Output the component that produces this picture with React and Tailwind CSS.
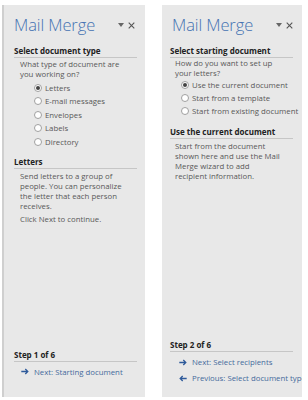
import React from "react";

const font = { fontFamily: '"Open Sans", "Noto Sans", sans-serif' };

function Radio({ checked, label, h }) {
  return (
    <div className={`flex items-center ${h}`}>
      <span className="w-[8px] h-[8px] rounded-full border border-[#a0a0a0] bg-white flex items-center justify-center mr-[3px] shrink-0">
        {checked && <span className="w-[4px] h-[4px] rounded-full bg-[#444]" />}
      </span>
      <span className="whitespace-nowrap">{label}</span>
    </div>
  );
}

function Header({ pr }) {
  return (
    <div className={`flex items-center justify-between pl-[10px] ${pr} pt-[10px] h-[30px]`}>
      <div className="text-[16.5px] font-light text-[#4472b2] leading-[20px] tracking-[-0.1px]">Mail Merge</div>
      <div className="flex items-center gap-[4px] text-[#555]">
        <svg width="6" height="4" viewBox="0 0 6 4"><path d="M0 0h6L3 4z" fill="#666" /></svg>
        <svg width="7" height="7" viewBox="0 0 7 7"><path d="M0.7 0.7l5.6 5.6M6.3 0.7L0.7 6.3" stroke="#555" strokeWidth="1.1" /></svg>
      </div>
    </div>
  );
}

function SectionTitle({ children, mx }) {
  return (
    <div className={`${mx} font-bold text-[8px] text-[#222] leading-[11px] pb-[1px] border-b border-[#c6c6c6] whitespace-nowrap`}>
      {children}
    </div>
  );
}

function Arrow({ dir }) {
  return (
    <svg width="8" height="7" viewBox="0 0 8 7" className="mr-[5px] shrink-0">
      {dir === "right" ? (
        <path d="M0.3 3.5h6.5M4.3 1l2.5 2.5L4.3 6" stroke="#2e5a9a" strokeWidth="1.3" fill="none" />
      ) : (
        <path d="M7.7 3.5H1.2M3.7 1L1.2 3.5 3.7 6" stroke="#2e5a9a" strokeWidth="1.3" fill="none" />
      )}
    </svg>
  );
}

function Link({ dir, children, pl, h }) {
  return (
    <div className={`flex items-center ${pl} ${h} text-[#456a9c] whitespace-nowrap overflow-hidden`}>
      <Arrow dir={dir} />
      <span>{children}</span>
    </div>
  );
}

export default function App() {
  return (
    <div className="w-[308px] h-[400px] bg-white flex items-start text-[7.8px] text-[#585858] leading-[10px]" style={font}>
      <div className="ml-[2px] mt-[5px] w-[143px] h-[392px] bg-[#e8e8e8] border-l-2 border-[#cfcfcf] flex flex-col">
        <Header pr="pr-[10px]" />
        <div className="mt-[10px]"><SectionTitle mx="ml-[10px] mr-[8px]">Select document type</SectionTitle></div>
        <div className="pl-[16px] mt-[1px]">
          <div>What type of document are</div>
          <div>you working on?</div>
        </div>
        <div className="pl-[30px] mt-[2px]">
          <Radio h="h-[13.5px]" checked label="Letters" />
          <Radio h="h-[13.5px]" label="E-mail messages" />
          <Radio h="h-[13.5px]" label="Envelopes" />
          <Radio h="h-[13.5px]" label="Labels" />
          <Radio h="h-[13.5px]" label="Directory" />
        </div>
        <div className="mt-[7px]"><SectionTitle mx="ml-[10px] mr-[8px]">Letters</SectionTitle></div>
        <div className="pl-[16px] mt-[2px]">
          <div>Send letters to a group of</div>
          <div>people. You can personalize</div>
          <div>the letter that each person</div>
          <div>receives.</div>
          <div className="mt-[3px]">Click Next to continue.</div>
        </div>
        <div className="mt-auto mb-[18px]">
          <SectionTitle mx="ml-[10px] mr-[8px]">Step 1 of 6</SectionTitle>
          <div className="pt-[2px]">
            <Link dir="right" pl="pl-[17px]" h="h-[15px]">Next: Starting document</Link>
          </div>
        </div>
      </div>
      <div className="ml-[17px] mt-[5px] w-[140px] h-[392px] bg-[#e8e8e8] flex flex-col">
        <Header pr="pr-[9px]" />
        <div className="mt-[10px]"><SectionTitle mx="ml-[8px] mr-[9px]">Select starting document</SectionTitle></div>
        <div className="pl-[13px]">
          <div>How do you want to set up</div>
          <div>your letters?</div>
        </div>
        <div className="pl-[19px] mt-[0.5px]">
          <Radio h="h-[13px]" checked label="Use the current document" />
          <Radio h="h-[13px]" label="Start from a template" />
          <Radio h="h-[13px]" label="Start from existing document" />
        </div>
        <div className="mt-[8px]"><SectionTitle mx="ml-[8px] mr-[9px]">Use the current document</SectionTitle></div>
        <div className="pl-[13px] mt-[2px]">
          <div>Start from the document</div>
          <div>shown here and use the Mail</div>
          <div>Merge wizard to add</div>
          <div>recipient information.</div>
        </div>
        <div className="mt-auto mb-[11px]">
          <SectionTitle mx="ml-[8px] mr-[9px]">Step 2 of 6</SectionTitle>
          <div className="pt-[2.5px]">
            <Link dir="right" pl="pl-[17px]" h="h-[16px]">Next: Select recipients</Link>
            <Link dir="left" pl="pl-[17px]" h="h-[16px]">Previous: Select document type</Link>
          </div>
        </div>
      </div>
    </div>
  );
}
